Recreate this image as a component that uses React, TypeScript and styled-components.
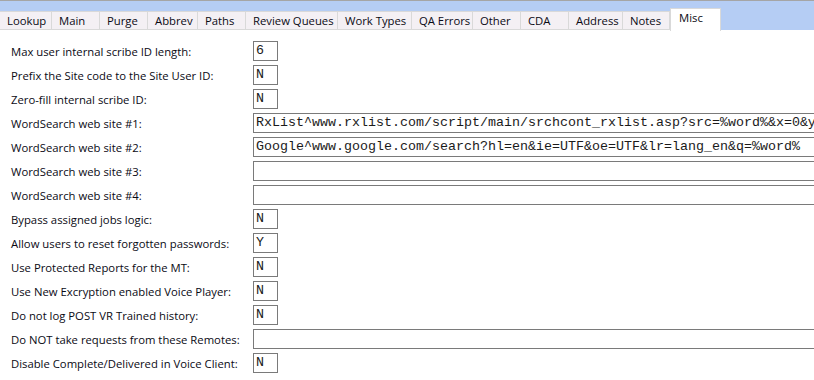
import * as React from "react";
import styled, { createGlobalStyle } from "styled-components";

const GlobalStyle = createGlobalStyle`
  html, body {
    margin: 0;
    padding: 0;
    background: #ffffff;
    overflow: hidden;
  }
  body {
    font-family: "Open Sans", "Noto Sans", sans-serif;
  }
`;

const Page = styled.div`
  width: 814px;
  height: 380px;
  overflow: hidden;
  background: #ffffff;
`;

const TabStrip = styled.div`
  height: 29px;
  border-top: 1px solid #a5a5a5;
  background: #b5cdf4;
  display: flex;
  align-items: flex-end;
`;

const Tab = styled.div<{ $w: number; $active?: boolean }>`
  box-sizing: border-box;
  width: ${(p) => p.$w}px;
  height: ${(p) => (p.$active ? 23 : 19)}px;
  margin-bottom: ${(p) => (p.$active ? -1 : 0)}px;
  padding: ${(p) => (p.$active ? "1px 0 0 8px" : "1px 0 0 7px")};
  background: ${(p) => (p.$active ? "#ffffff" : "#f4f0f4")};
  border: 1px solid #d9d9d9;
  border-bottom: ${(p) => (p.$active ? "none" : "1px solid #d9d9d9")};
  border-left: ${(p) => (p.$active ? "1px solid #d9d9d9" : "none")};
  font-size: 11.3px;
  line-height: 16px;
  color: #0a0a14;
  white-space: nowrap;
  z-index: ${(p) => (p.$active ? 1 : 0)};
`;

const Form = styled.div`
  padding: 9px 0 0 11px;
  display: flex;
  flex-direction: column;
`;

const Row = styled.div`
  height: 24px;
  display: flex;
  align-items: center;
`;

const Label = styled.div`
  width: 242px;
  flex-shrink: 0;
  font-size: 11.3px;
  color: #0a0a14;
  white-space: nowrap;
`;

const Field = styled.div<{ $wide?: boolean }>`
  box-sizing: border-box;
  height: 20px;
  width: ${(p) => (p.$wide ? "600px" : "25px")};
  flex-shrink: 0;
  border: 1px solid #7a7a7a;
  padding: 0 0 0 2px;
  font-family: "Liberation Mono", "Courier New", monospace;
  font-size: 13.33px;
  line-height: 18px;
  color: #1a1a1a;
  white-space: nowrap;
  overflow: hidden;
`;

const tabs: [string, number][] = [
  ["Lookup", 52],
  ["Main", 48],
  ["Purge", 48],
  ["Abbrev", 50],
  ["Paths", 48],
  ["Review Queues", 92],
  ["Work Types", 74],
  ["QA Errors", 61],
  ["Other", 48],
  ["CDA", 48],
  ["Address", 54],
  ["Notes", 47],
];

const rows: { label: string; value: string; wide?: boolean }[] = [
  { label: "Max user internal scribe ID length:", value: "6" },
  { label: "Prefix the Site code to the Site User ID:", value: "N" },
  { label: "Zero-fill internal scribe ID:", value: "N" },
  {
    label: "WordSearch web site #1:",
    value: "RxList^www.rxlist.com/script/main/srchcont_rxlist.asp?src=%word%&x=0&y",
    wide: true,
  },
  {
    label: "WordSearch web site #2:",
    value: "Google^www.google.com/search?hl=en&ie=UTF&oe=UTF&lr=lang_en&q=%word%",
    wide: true,
  },
  { label: "WordSearch web site #3:", value: "", wide: true },
  { label: "WordSearch web site #4:", value: "", wide: true },
  { label: "Bypass assigned jobs logic:", value: "N" },
  { label: "Allow users to reset forgotten passwords:", value: "Y" },
  { label: "Use Protected Reports for the MT:", value: "N" },
  { label: "Use New Excryption enabled Voice Player:", value: "N" },
  { label: "Do not log POST VR Trained history:", value: "N" },
  { label: "Do NOT take requests from these Remotes:", value: "", wide: true },
  { label: "Disable Complete/Delivered in Voice Client:", value: "N" },
];

const App: React.FunctionComponent = () => {
  return (
    <Page>
      <GlobalStyle />
      <TabStrip>
        {tabs.map(([name, w]) => (
          <Tab key={name} $w={w}>
            {name}
          </Tab>
        ))}
        <Tab $w={51} $active>
          Misc
        </Tab>
      </TabStrip>
      <Form>
        {rows.map((r) => (
          <Row key={r.label}>
            <Label>{r.label}</Label>
            <Field $wide={r.wide}>{r.value}</Field>
          </Row>
        ))}
      </Form>
    </Page>
  );
};

export default App;
